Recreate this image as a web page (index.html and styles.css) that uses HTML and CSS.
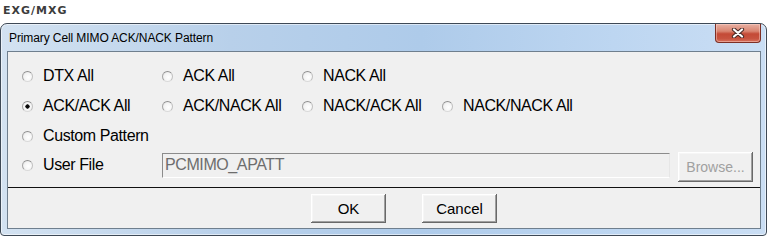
FILE: index.html
```html
<!DOCTYPE html>
<html>
<head>
<meta charset="utf-8">
<link rel="stylesheet" href="styles.css">
</head>
<body>
<div class="app-title">EXG/MXG</div>
<div class="window">
  <div class="titlebar">
    <span class="title">Primary Cell MIMO ACK/NACK Pattern</span>
    <button class="close" aria-label="Close">
      <svg width="14" height="10" viewBox="0 0 14 10">
        <path d="M3 1.5 L11 8.5 M11 1.5 L3 8.5" stroke="#4a2c28" stroke-width="4.2" stroke-linecap="round" fill="none"/>
        <path d="M3 1.5 L11 8.5 M11 1.5 L3 8.5" stroke="#ffffff" stroke-width="2.2" stroke-linecap="round" fill="none"/>
      </svg>
    </button>
  </div>
  <div class="client">
    <div class="options">
      <div class="row">
        <label class="opt"><input type="radio" name="pat"><span>DTX All</span></label>
        <label class="opt"><input type="radio" name="pat"><span>ACK All</span></label>
        <label class="opt"><input type="radio" name="pat"><span>NACK All</span></label>
      </div>
      <div class="row">
        <label class="opt"><input type="radio" name="pat" checked><span>ACK/ACK All</span></label>
        <label class="opt"><input type="radio" name="pat"><span>ACK/NACK All</span></label>
        <label class="opt"><input type="radio" name="pat"><span>NACK/ACK All</span></label>
        <label class="opt"><input type="radio" name="pat"><span>NACK/NACK All</span></label>
      </div>
      <div class="row">
        <label class="opt wide"><input type="radio" name="pat"><span>Custom Pattern</span></label>
      </div>
      <div class="row file-row">
        <label class="opt"><input type="radio" name="pat"><span>User File</span></label>
        <input class="file" type="text" value="PCMIMO_APATT" disabled>
        <button class="btn browse" disabled>Browse...</button>
      </div>
    </div>
    <div class="footer">
      <button class="btn">OK</button>
      <button class="btn">Cancel</button>
    </div>
  </div>
</div>
</body>
</html>
```

FILE: styles.css
```css
html, body {
  margin: 0;
  padding: 0;
  background: #ffffff;
}

.app-title {
  height: 23px;
  box-sizing: border-box;
  padding: 4px 0 0 3px;
  font: bold 11px/13px "DejaVu Sans", sans-serif;
  letter-spacing: 1px;
  color: #3c3c3c;
}

.window {
  width: 767px;
  height: 213px;
  box-sizing: border-box;
  border: 1px solid #3e4956;
  border-radius: 7px 7px 4px 4px;
  padding: 0 5px 6px 6px;
  background: linear-gradient(90deg, #d3e2f1 0%, #b8d0ea 30%, #aecbea 55%, #bdd6f1 80%, #cadef4 100%);
  box-shadow: inset 0 0 0 1px rgba(255, 255, 255, 0.55);
  display: flex;
  flex-direction: column;
}

.titlebar {
  height: 27px;
  display: flex;
  align-items: center;
  position: relative;
}

.title {
  padding-left: 2px;
  font: 12px "Liberation Sans", Arial, sans-serif;
  letter-spacing: -0.1px;
  color: #000;
}

.close {
  position: absolute;
  right: 0;
  top: 0;
  width: 46px;
  height: 19px;
  box-sizing: border-box;
  padding: 0;
  border: 1px solid #7d2f25;
  border-top: none;
  border-radius: 0 0 4px 4px;
  background: linear-gradient(180deg, #e8b0a3 0%, #d98571 40%, #c44a36 55%, #c7533f 80%, #d8705c 100%);
  box-shadow: inset 0 0 0 1px rgba(255, 220, 210, 0.45);
  display: flex;
  align-items: center;
  justify-content: center;
}

.client {
  flex: 1;
  border: 1px solid #6f7f8e;
  background: #f0f0f0;
  display: flex;
  flex-direction: column;
  font: 16px "Liberation Sans", Arial, sans-serif;
  color: #000;
}

.options {
  padding: 9px 0 0 14px;
  height: 128px;
  box-sizing: border-box;
}

.row {
  height: 30px;
  display: grid;
  grid-template-columns: repeat(4, 140px);
  align-items: center;
}

.opt {
  display: flex;
  align-items: center;
  gap: 10px;
  white-space: nowrap;
  letter-spacing: -0.4px;
}

.opt.wide {
  grid-column: span 2;
}

.opt input {
  appearance: none;
  -webkit-appearance: none;
  margin: 0;
  width: 11px;
  height: 11px;
  border-radius: 50%;
  border: 1px solid;
  border-color: #8e8e8e #c0c0c0 #dadada #a6a6a6;
  background: radial-gradient(circle at 60% 60%, #ffffff 0%, #f4f4f4 55%, #d6d6d6 100%);
  box-sizing: border-box;
  position: relative;
  top: 0;
}

.opt input:checked {
  background: radial-gradient(circle, #000 0, #111 1.9px, #fafafa 2.4px, #f0f0f0 70%, #d8d8d8 100%);
}

.file-row {
  display: flex;
  align-items: center;
  margin-top: -1px;
}

.file-row .opt {
  width: 140px;
}

.file {
  width: 508px;
  height: 25px;
  box-sizing: border-box;
  margin: 0 8px 0 0;
  padding: 0 2px;
  border: 1px solid;
  border-color: #8c8c8c #e6e6e6 #ffffff #8c8c8c;
  background: #f0f0f0;
  font: 16px "Liberation Sans", Arial, sans-serif;
  letter-spacing: -0.4px;
  color: #6d6d6d;
}

.btn {
  width: 75px;
  height: 29px;
  box-sizing: border-box;
  padding: 0;
  border: none;
  background: #f0f0f0;
  box-shadow: inset -1px -1px 0 #696969, inset 1px 1px 0 #ffffff, inset -2px -2px 0 #a0a0a0, inset 2px 2px 0 #f6f6f6;
  font: 15px "Liberation Sans", Arial, sans-serif;
  color: #000;
}

.browse {
  height: 30px;
  font-size: 14px;
  color: #a0a0a0;
  margin-top: 3px;
}

.footer {
  margin-top: 7px;
  border-top: 1px solid #111;
  flex: 1;
  display: flex;
  gap: 36px;
  padding: 6px 0 0 303px;
  box-sizing: border-box;
  align-items: flex-start;
}
```
